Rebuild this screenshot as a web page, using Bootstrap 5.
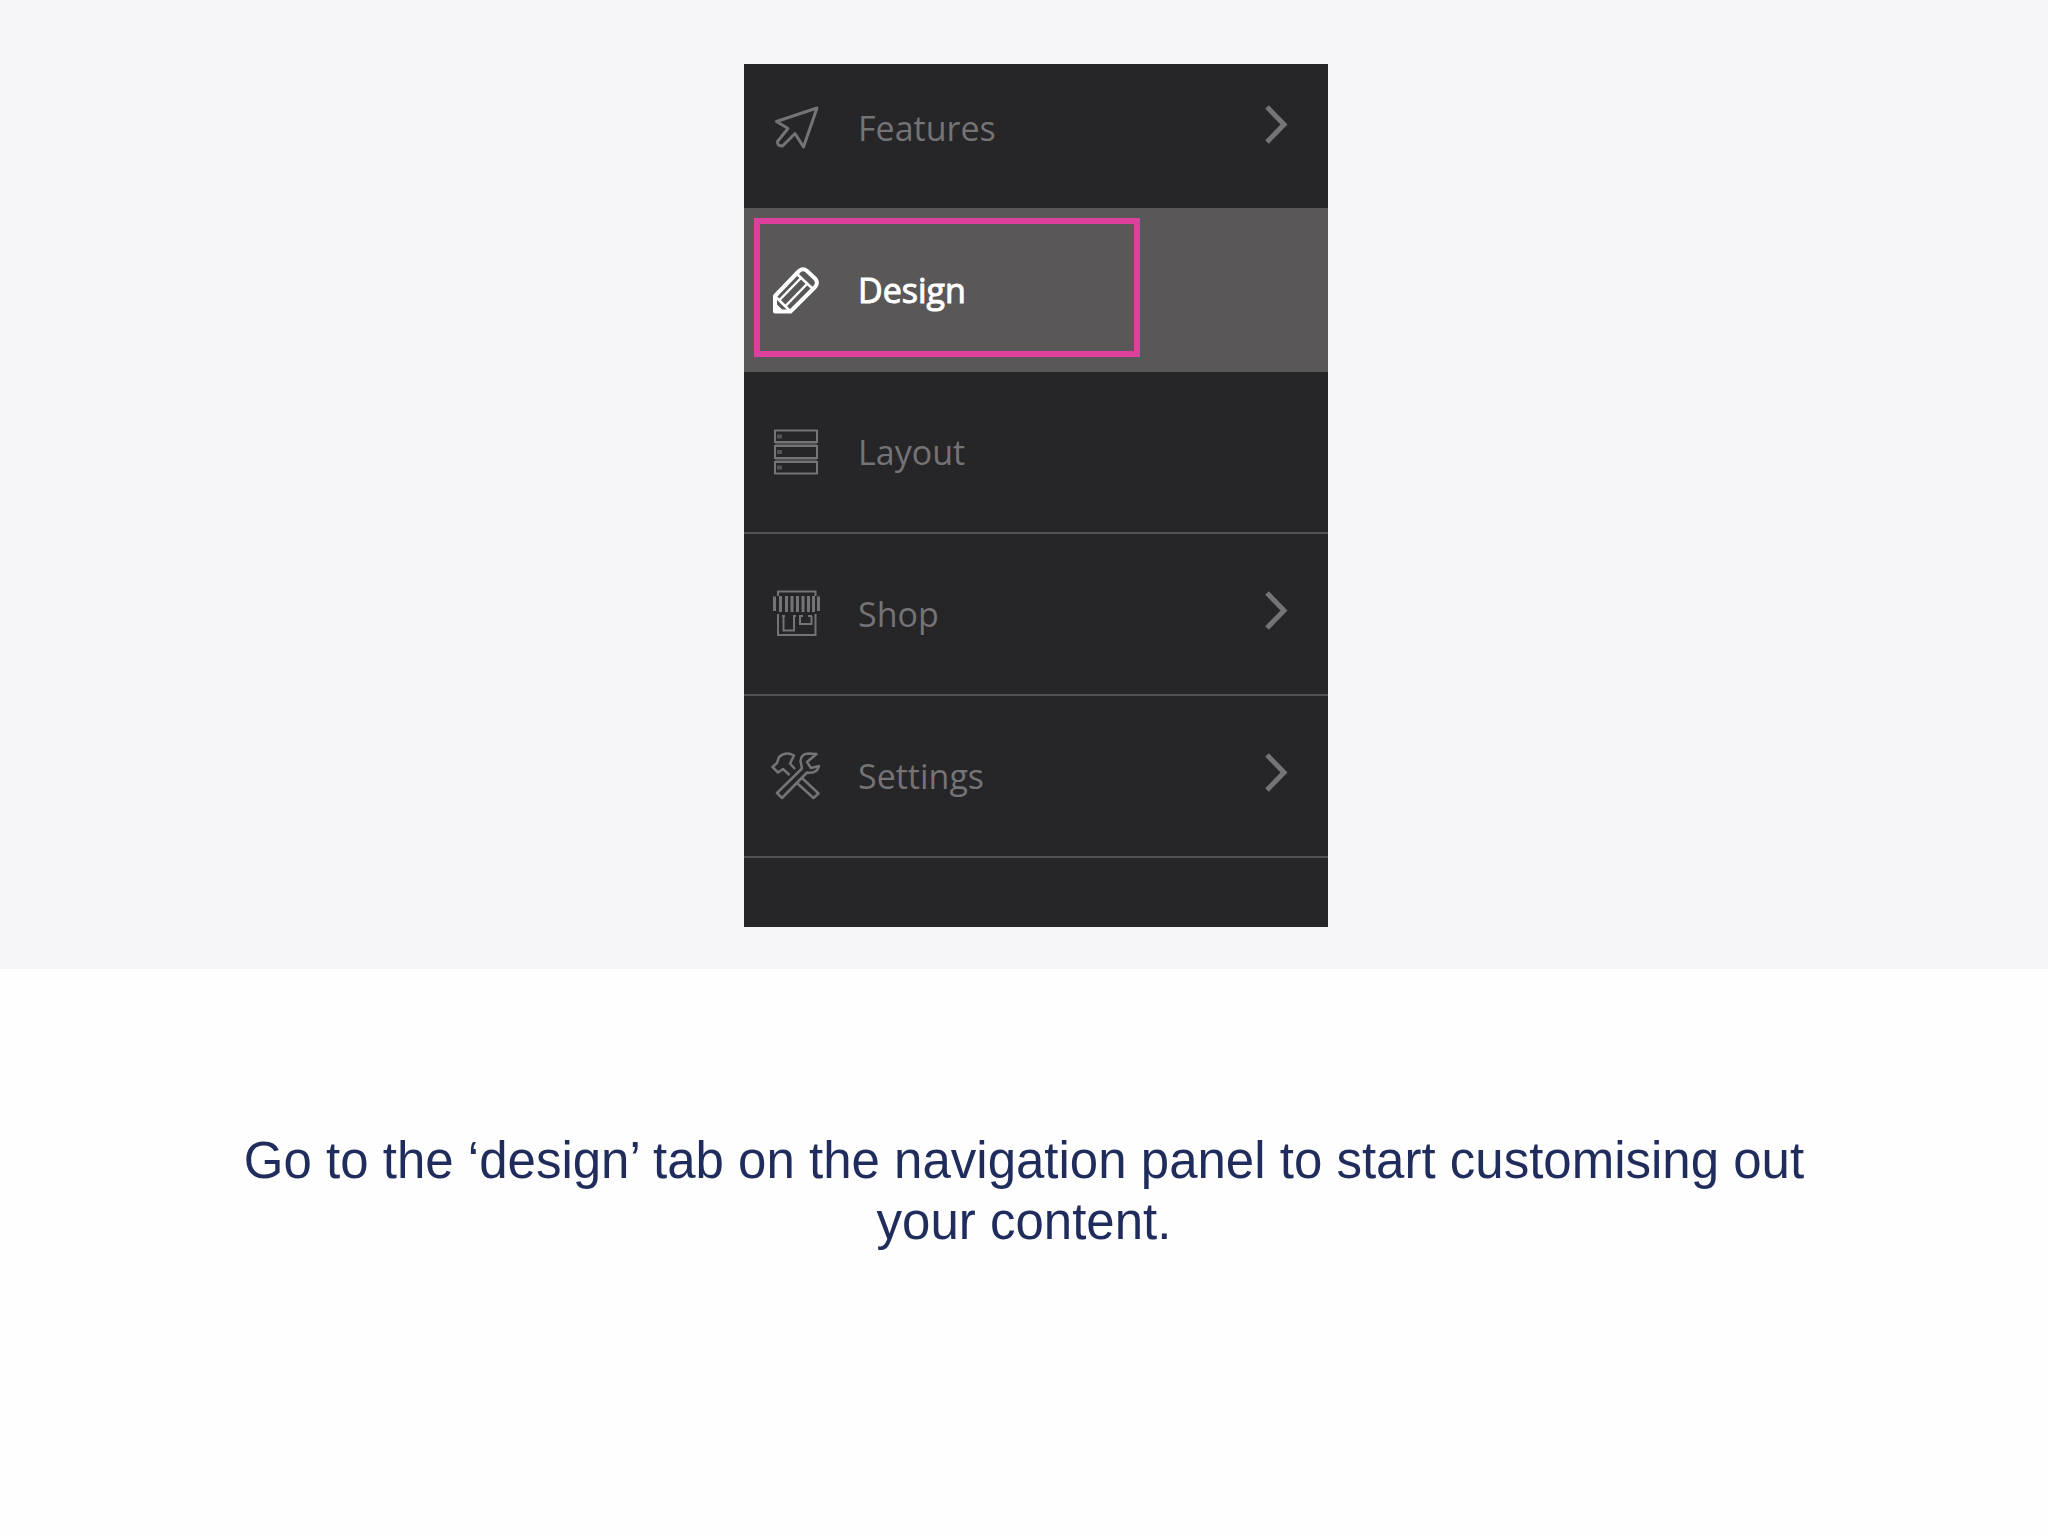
<!DOCTYPE html>
<html lang="en">
<head>
<meta charset="utf-8">
<meta name="viewport" content="width=device-width, initial-scale=1">
<title>Design tab</title>
<link href="https://cdn.jsdelivr.net/npm/bootstrap@5.3.0/dist/css/bootstrap.min.css" rel="stylesheet">
<style>
  body { background: #fefefe; color: #1f2c5c; font-family: "Liberation Sans", Arial, sans-serif; }
  .stage { background: #f5f4f6; padding: 64px 0 42px 24px; }
  .side-panel { width: 584px; background: #262527; padding-bottom: 69px; font-family: "Open Sans", sans-serif; }
  .side-link { height: 162px; padding: 0 40px 0 28px; gap: 38px; font-size: 34px; line-height: 46px; color: #747375; border-bottom: 2px solid #515052; }
  .side-link:hover { color: #fff; }
  .side-link.first-item { height: 144px; padding-bottom: 16px; border-bottom: 0; }
  .side-link.current { height: 164px; background: #595757; color: #fff; border-bottom: 0; }
  .side-link.current .item-label { -webkit-text-stroke: 1px #fff; }
  .side-link svg { width: 48px; height: 48px; flex: none; fill: none; stroke: currentColor; stroke-width: 2; overflow: visible; }
  .side-link .chev { stroke-width: 5; width: 24px; }
  .highlight { top: 10px; left: 10px; width: 386px; height: 139px; border: 6px solid #dd409d; pointer-events: none; }
  .caption-text { max-width: 1640px; padding: 161px 24px; font-size: 51px; line-height: 61px; }
</style>
</head>
<body>
<main>
  <section class="stage d-flex justify-content-center">
    <nav class="side-panel d-flex flex-column" aria-label="Site editor">
      <a href="#features" class="side-link first-item d-flex align-items-center text-decoration-none">
        <svg viewBox="0 0 48 48" aria-hidden="true" stroke-linejoin="round"><path stroke-width="3" d="M45 4 4.500 17.500 16 24.500 5.500 37.500Q5 42 10.500 42L23 29.500 31.500 43Z"/></svg>
        <span class="item-label flex-grow-1">Features</span>
        <svg class="chev" viewBox="0 0 24 48" aria-hidden="true"><path d="M3 3 20 20.500 3 38"/></svg>
      </a>
      <a href="#design" class="side-link current position-relative d-flex align-items-center text-decoration-none" aria-current="page">
        <svg viewBox="0 0 48 48" aria-hidden="true" stroke-linejoin="round"><path stroke-width="4" d="M3 30 27 5Q31 1.500 35 5L43 12.500Q46.500 16 43.500 20.500L18.500 45.500H3Z"/><path stroke-width="2.500" d="M25 8 41 23M3 30 18.500 45.500M8 33.500 29 12M14 39.500 35 18"/><path fill="currentColor" d="M3 38 10.500 45.500H3Z"/></svg>
        <span class="item-label flex-grow-1">Design</span>
        <span class="highlight position-absolute"></span>
      </a>
      <a href="#layout" class="side-link d-flex align-items-center text-decoration-none">
        <svg viewBox="0 0 48 48" aria-hidden="true"><path d="M3 2.500H45V14H3ZM3 18H45V30H3ZM3 34H45V45.500H3Z"/><path stroke-width="3" opacity=".5" d="M3 16H45M3 32H45"/><path stroke-width="4" opacity=".6" d="M5 8.500h5M5 24h5M5 39.500h5"/></svg>
        <span class="item-label flex-grow-1">Layout</span>
      </a>
      <a href="#shop" class="side-link d-flex align-items-center text-decoration-none">
        <svg viewBox="0 0 48 48" aria-hidden="true"><path d="M6 6V1.500H43.500V6M6 24V45H43.500V24"/><path stroke-width="3" d="M2.500 6.500V21M8.500 6V22M14.500 6V22M20 6V22M25.500 6V22M31 6V22M36.500 6V22M41.500 6V22M46.500 6.500V21"/><path d="M11.500 26V40.500H22V26M10 26h3M21 26h3M28 26V34H39.500V26M27 26h4M36 26h4"/></svg>
        <span class="item-label flex-grow-1">Shop</span>
        <svg class="chev" viewBox="0 0 24 48" aria-hidden="true"><path d="M3 3 20 20.500 3 38"/></svg>
      </a>
      <a href="#settings" class="side-link d-flex align-items-center text-decoration-none">
        <svg viewBox="0 0 48 48" aria-hidden="true" stroke-linejoin="round"><path stroke-width="2.500" d="M36 1.500Q29 2 28.500 9L30 16.500 5 41 10 46 35 20.500Q45 22 47 14L39 16 35 10 44.500 2Z"/><path stroke-width="2.500" d="M23 17 18 11.500 22 3.500Q14-1 7 5L5 11 .500 15 6 20.500 11 17 17.500 23M30 26 46.500 41.500 41.500 46 25 31"/></svg>
        <span class="item-label flex-grow-1">Settings</span>
        <svg class="chev" viewBox="0 0 24 48" aria-hidden="true"><path d="M3 3 20 20.500 3 38"/></svg>
      </a>
    </nav>
  </section>
  <p class="caption-text mx-auto mb-0 text-center">Go to the ‘design’ tab on the navigation panel to start customising out your content.</p>
</main>
<script src="https://cdn.jsdelivr.net/npm/bootstrap@5.3.0/dist/js/bootstrap.bundle.min.js"></script>
</body>
</html>
